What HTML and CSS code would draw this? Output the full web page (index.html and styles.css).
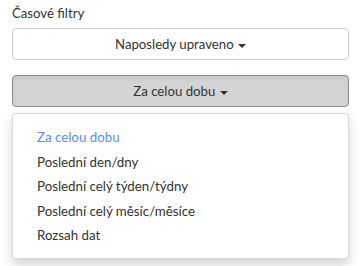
FILE: index.html
```html
<!DOCTYPE html>
<html lang="cs">
<head>
<meta charset="utf-8">
<title>Časové filtry</title>
<link rel="stylesheet" href="styles.css">
</head>
<body>
<div class="panel">
  <div class="label">Časové filtry</div>
  <button class="btn" type="button">Naposledy upraveno <span class="caret"></span></button>
  <div class="dropdown">
    <button class="btn btn-active" type="button">Za celou dobu <span class="caret"></span></button>
    <ul class="menu">
      <li class="item item-active">Za celou dobu</li>
      <li class="item">Poslední den/dny</li>
      <li class="item">Poslední celý týden/týdny</li>
      <li class="item">Poslední celý měsíc/měsíce</li>
      <li class="item">Rozsah dat</li>
    </ul>
  </div>
  <div class="under under-a"></div>
  <div class="under under-b"></div>
</div>
</body>
</html>
```

FILE: styles.css
```css
html, body {
  margin: 0;
  padding: 0;
  background: #fff;
}
body {
  font-family: Lato, "Open Sans", sans-serif;
  color: #333;
  font-size: 13px;
  min-height: 266px;
}
.panel {
  padding: 4px 11px 20px 12px;
  display: flex;
  flex-direction: column;
}
.label {
  font-size: 13.2px;
  line-height: 18px;
  height: 18px;
  margin-bottom: 6px;
}
.btn {
  display: block;
  width: 100%;
  height: 32px;
  box-sizing: border-box;
  border: 1px solid #ccc;
  border-radius: 4px;
  background: #fff;
  color: #333;
  font-family: Lato, "Open Sans", sans-serif;
  font-size: 13.2px;
  padding: 0 12px;
  text-align: center;
  margin: 0;
}
.btn-active {
  background: #d4d4d4;
  border-color: #8c8c8c;
  box-shadow: inset 0 3px 5px rgba(0,0,0,.05);
}
.caret {
  display: inline-block;
  width: 0;
  height: 0;
  margin-left: 1px;
  vertical-align: middle;
  border-top: 4px solid #333;
  border-left: 4px solid transparent;
  border-right: 4px solid transparent;
}
.dropdown {
  position: relative;
  margin-top: 15px;
  z-index: 2;
}
.menu {
  position: absolute;
  top: 100%;
  left: 0;
  right: 0;
  box-sizing: border-box;
  height: 146px;
  margin: 6px 0 0;
  padding: 11px 0 0;
  list-style: none;
  background: #fff;
  border: 1px solid rgba(0,0,0,.15);
  border-radius: 4px;
  box-shadow: 0 6px 12px rgba(0,0,0,.175);
}
.item {
  display: block;
  height: 24.5px;
  padding: 0 24px;
  line-height: 24px;
  font-size: 13.3px;
  color: #333;
  white-space: nowrap;
}
.item-active {
  color: #5a8ef0;
}
.under {
  box-sizing: border-box;
  border: 1px solid #aaa;
  border-radius: 4px;
}
.under-a {
  margin-top: 38px;
  height: 45px;
}
.under-b {
  margin-top: 25px;
  height: 31px;
}
```
